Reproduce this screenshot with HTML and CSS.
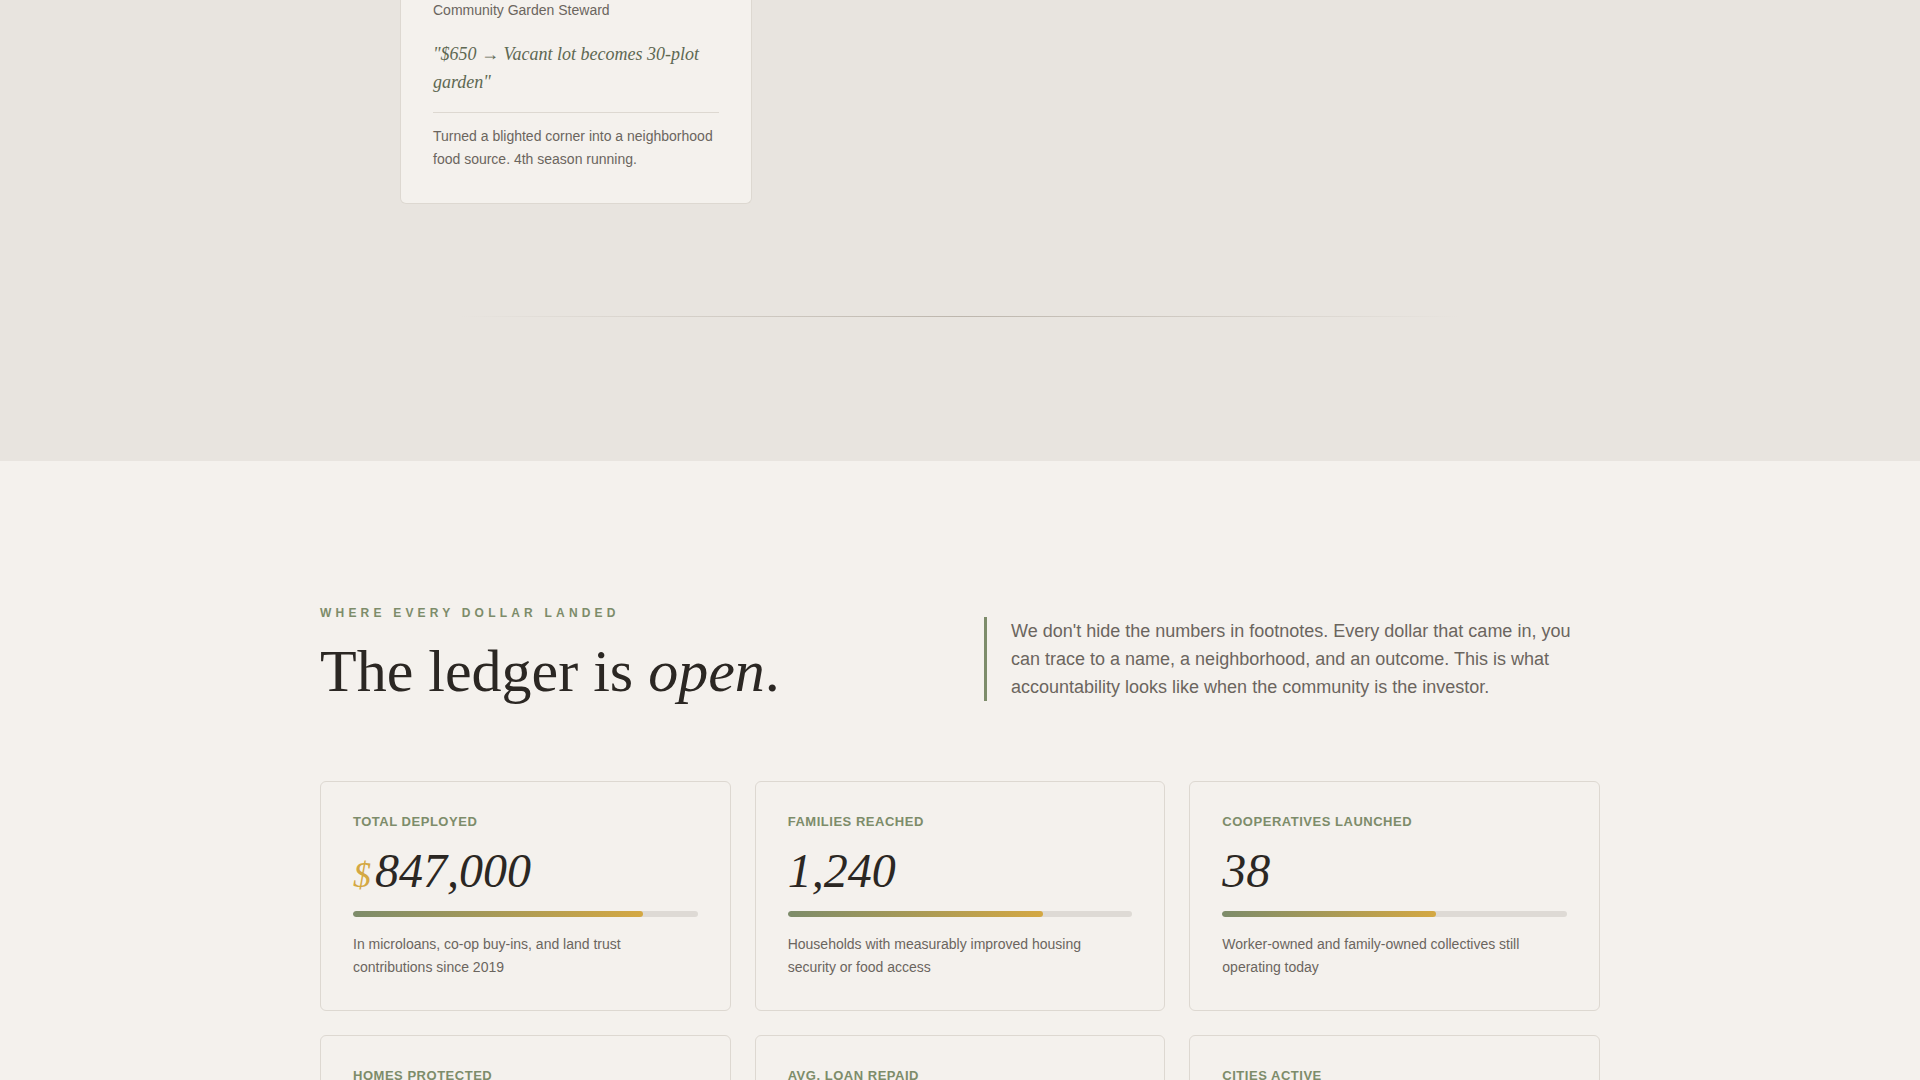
FILE: index.html
```html
<!DOCTYPE html>
<html lang="en">
<head>
<meta charset="utf-8">
<title>Where every dollar landed</title>
<link rel="stylesheet" href="styles.css">
</head>
<body>

<section class="stories">
  <div class="stories-grid">
    <article class="story-card">
      <p class="story-role">Community Garden Steward</p>
      <p class="story-quote">"$650 → Vacant lot becomes 30-plot garden"</p>
      <p class="story-text">Turned a blighted corner into a neighborhood food source. 4th season running.</p>
    </article>
  </div>
  <div class="fade-rule"></div>
</section>

<section class="ledger">
  <div class="ledger-inner">
    <header class="ledger-head">
      <div class="ledger-title">
        <p class="eyebrow">Where every dollar landed</p>
        <h2 class="headline">The ledger is <em>open</em>.</h2>
      </div>
      <p class="ledger-intro">We don't hide the numbers in footnotes. Every dollar that came in, you can trace to a name, a neighborhood, and an outcome. This is what accountability looks like when the community is the investor.</p>
    </header>

    <div class="stat-grid">
      <div class="stat-card">
        <p class="stat-label">Total deployed</p>
        <p class="stat-value"><span class="stat-currency">$</span>847,000</p>
        <div class="stat-track"><div class="stat-fill" style="width: 84%"></div></div>
        <p class="stat-note">In microloans, co-op buy-ins, and land trust contributions since 2019</p>
      </div>
      <div class="stat-card">
        <p class="stat-label">Families reached</p>
        <p class="stat-value">1,240</p>
        <div class="stat-track"><div class="stat-fill" style="width: 74%"></div></div>
        <p class="stat-note">Households with measurably improved housing security or food access</p>
      </div>
      <div class="stat-card">
        <p class="stat-label">Cooperatives launched</p>
        <p class="stat-value">38</p>
        <div class="stat-track"><div class="stat-fill" style="width: 62%"></div></div>
        <p class="stat-note">Worker-owned and family-owned collectives still operating today</p>
      </div>
      <div class="stat-card">
        <p class="stat-label">Homes protected</p>
        <p class="stat-value">212</p>
        <div class="stat-track"><div class="stat-fill" style="width: 58%"></div></div>
        <p class="stat-note">Families kept in place through land trust and emergency repair funds</p>
      </div>
      <div class="stat-card">
        <p class="stat-label">Avg. loan repaid</p>
        <p class="stat-value">96%</p>
        <div class="stat-track"><div class="stat-fill" style="width: 96%"></div></div>
        <p class="stat-note">Repayment rate across every microloan issued to date</p>
      </div>
      <div class="stat-card">
        <p class="stat-label">Cities active</p>
        <p class="stat-value">14</p>
        <div class="stat-track"><div class="stat-fill" style="width: 45%"></div></div>
        <p class="stat-note">Neighborhood chapters organizing and lending locally</p>
      </div>
    </div>
  </div>
</section>

</body>
</html>
```

FILE: styles.css
```css
:root {
  --paper: #f4f1ed;
  --stone: #e8e4df;
  --ink: #2b2723;
  --muted: #6b655e;
  --sage: #7d8c6a;
  --gold: #d4a843;
  --line: #ddd8d1;
}

* {
  box-sizing: border-box;
}

body {
  margin: 0;
  background: var(--paper);
  color: var(--ink);
  font-family: "Liberation Sans", Arial, sans-serif;
}

p,
h2 {
  margin: 0;
}

/* ---------- Stories strip ---------- */

.stories {
  background: var(--stone);
  padding-bottom: 144px;
}

.stories-grid {
  max-width: 1120px;
  margin: 0 auto;
  display: grid;
  grid-template-columns: repeat(3, 1fr);
  gap: 32px;
}

.story-card {
  background: var(--paper);
  border: 1px solid var(--line);
  border-top: none;
  border-radius: 0 0 6px 6px;
  padding: 0 32px 32px;
}

.story-role {
  font-size: 14px;
  line-height: 20px;
  color: var(--muted);
}

.story-quote {
  margin-top: 20px;
  padding-bottom: 16px;
  border-bottom: 1px solid var(--line);
  font-family: "Liberation Serif", "Times New Roman", serif;
  font-style: italic;
  font-size: 18px;
  line-height: 28px;
  color: #5e6852;
}

.story-text {
  margin-top: 12px;
  font-size: 14px;
  line-height: 1.65;
  color: var(--muted);
}

.fade-rule {
  width: 1000px;
  height: 1px;
  margin: 112px auto 0;
  background: linear-gradient(90deg, rgba(180, 172, 162, 0), #bdb6ad 50%, rgba(180, 172, 162, 0));
}

/* ---------- Ledger ---------- */

.ledger {
  padding: 144px 0 120px;
}

.ledger-inner {
  max-width: 1280px;
  margin: 0 auto;
}

.ledger-head {
  display: grid;
  grid-template-columns: 1fr 1fr;
  gap: 48px;
  align-items: end;
  margin-bottom: 80px;
}

.eyebrow {
  font-size: 12px;
  line-height: 16px;
  font-weight: 700;
  letter-spacing: 0.35em;
  text-transform: uppercase;
  color: var(--sage);
  margin-bottom: 20px;
}

.headline {
  font-family: "Liberation Serif", "Times New Roman", serif;
  font-weight: 400;
  font-size: 60px;
  line-height: 1;
  color: var(--ink);
}

.headline em {
  font-style: italic;
}

.ledger-intro {
  border-left: 3px solid var(--sage);
  padding-left: 24px;
  font-size: 18px;
  line-height: 28px;
  color: var(--muted);
}

.stat-grid {
  display: grid;
  grid-template-columns: repeat(3, 1fr);
  gap: 24px;
}

.stat-card {
  background: var(--paper);
  border: 1px solid var(--line);
  border-radius: 6px;
  padding: 32px;
}

.stat-label {
  font-size: 13px;
  line-height: 16px;
  font-weight: 700;
  letter-spacing: 0.04em;
  text-transform: uppercase;
  color: var(--sage);
  margin-bottom: 17px;
}

.stat-value {
  font-family: "Liberation Serif", "Times New Roman", serif;
  font-style: italic;
  font-size: 48px;
  line-height: 1;
  color: var(--ink);
}

.stat-currency {
  font-size: 0.75em;
  color: var(--gold);
  margin-right: 4px;
}

.stat-track {
  height: 6px;
  margin: 16px 0 16px;
  border-radius: 3px;
  background: #dedad5;
  overflow: hidden;
}

.stat-fill {
  height: 100%;
  border-radius: 3px;
  background: linear-gradient(90deg, var(--sage), var(--gold));
}

.stat-note {
  font-size: 14px;
  line-height: 1.6;
  color: var(--muted);
  max-width: 300px;
}
```
